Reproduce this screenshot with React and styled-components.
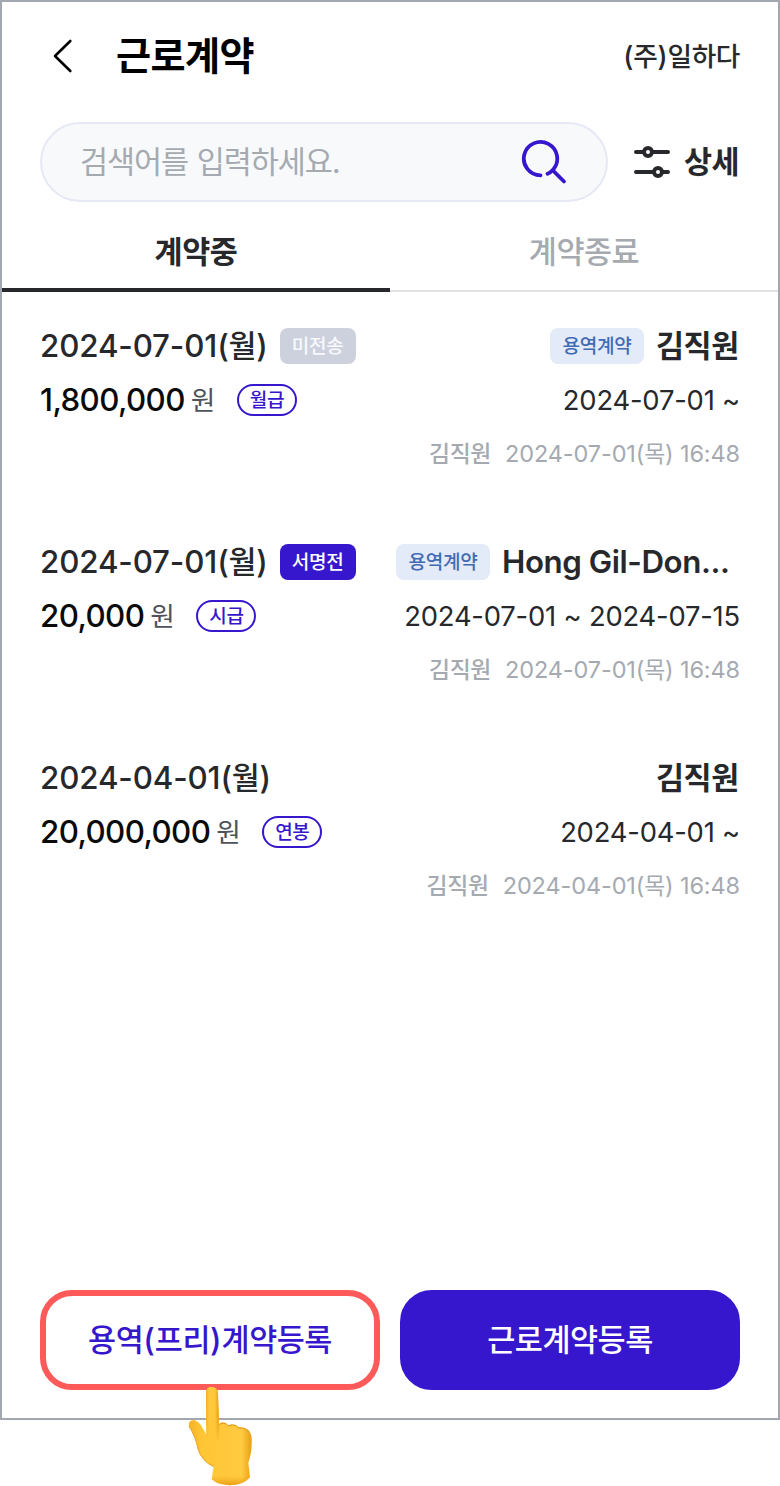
import React from "react";
import styled, { createGlobalStyle } from "styled-components";

const color = {
  primary: "#3617CE",
  ink: "#26282B",
  black: "#0A0A0A",
  muted: "#A5AAB1",
  frame: "#A3A8B0",
  highlight: "#FF5A5A",
};

const GlobalStyle = createGlobalStyle`
  * { box-sizing: border-box; }
  body {
    margin: 0;
    background: #fff;
    font-family: Inter, "Noto Sans CJK KR", sans-serif;
    color: ${color.ink};
  }
  button { font: inherit; color: inherit; border: 0; background: none; padding: 0; margin: 0; }
`;

const Page = styled.div`
  position: relative;
  width: 780px;
  height: 1486px;
  overflow: hidden;
`;

const Frame = styled.main`
  display: flex;
  flex-direction: column;
  width: 780px;
  height: 1420px;
  border: 2px solid ${color.frame};
`;

/* One line of text: Hangul runs are set slightly smaller than Latin ones. */
const Line = styled.span`
  display: block;
  white-space: pre;
  font-size: ${(p) => p.$size * 0.978}px;
  font-weight: ${(p) => p.$weight || 400};
  letter-spacing: ${(p) => p.$track || 0}px;
  color: ${(p) => p.$color || "inherit"};
  line-height: 36px;
`;

const Hangul = styled.span`
  font-family: "Noto Sans CJK KR", sans-serif;
  font-size: 0.975em;
  letter-spacing: ${(p) => (p.$tight ? -0.035 : -0.0156)}em;
  line-height: 1;
`;

function Text({ children, $tight, ...rest }) {
  const runs = children.split(/([\uac00-\ud7a3]+)/).filter(Boolean);
  return (
    <Line {...rest}>
      {runs.map((run, i) =>
        /[\uac00-\ud7a3]/.test(run) ? <Hangul key={i} $tight={$tight}>{run}</Hangul> : run
      )}
    </Line>
  );
}

const Header = styled.header`
  display: flex;
  align-items: center;
  height: 108px;
  padding: 0 38px;
`;

const BackButton = styled.button`
  display: flex;
  width: 44px;
  height: 44px;
  margin-right: 32px;
`;

const Title = styled.h1`
  margin: 0 0 4px;
`;

const Company = styled.div`
  margin-left: auto;
`;

const SearchRow = styled.div`
  display: flex;
  align-items: center;
  margin-top: 12px;
  padding: 0 38px;
`;

const SearchField = styled.div`
  display: flex;
  align-items: center;
  justify-content: space-between;
  width: 568px;
  height: 80px;
  padding: 0 38px;
  border: 2px solid #e6e9f5;
  border-radius: 40px;
  background: #f8f9fb;
`;

const DetailButton = styled.button`
  display: flex;
  align-items: center;
  gap: 14px;
  margin-left: 26px;
`;

const Tabs = styled.nav`
  display: grid;
  grid-template-columns: 1fr 1fr;
  height: 80px;
  margin-top: 10px;
  margin-bottom: 36px;
  flex-shrink: 0;
  box-shadow: inset 0 -2px #e0e1e3;
`;

const Tab = styled.button`
  display: flex;
  align-items: center;
  justify-content: center;
  border-bottom: 4px solid ${(p) => (p.$active ? color.ink : "transparent")};
  padding-top: 4px;
`;

const List = styled.section`
  display: flex;
  flex-direction: column;
  gap: 72px;
  padding: 0 38px;
`;

const Card = styled.article`
  display: flex;
  flex-direction: column;
  gap: 18px;
`;

const CardRow = styled.div`
  display: flex;
  align-items: center;
  justify-content: ${(p) => (p.$end ? "flex-end" : "space-between")};
  gap: ${(p) => (p.$end ? 14 : 0)}px;
  height: 36px;
`;

const Group = styled.div`
  display: flex;
  align-items: center;
  gap: ${(p) => p.$gap || 12}px;
`;

const tones = {
  idle: ["#CDD1DD", "#F8F9FB"],
  primary: [color.primary, "#fff"],
  soft: ["#E3EAF8", "#416BB3"],
};

const Badge = styled.div`
  display: flex;
  align-items: center;
  justify-content: center;
  width: ${(p) => p.$width}px;
  height: 36px;
  border-radius: 8px;
  background: ${(p) => tones[p.$tone][0]};
  color: ${(p) => tones[p.$tone][1]};
`;

const Pill = styled.div`
  display: flex;
  align-items: center;
  justify-content: center;
  width: 60px;
  height: 32px;
  margin-left: 16px;
  border: 2px solid ${color.primary};
  border-radius: 16px;
  color: ${color.primary};
`;

const NameBox = styled.div`
  width: ${(p) => p.$width}px;
`;

const Actions = styled.footer`
  display: grid;
  grid-template-columns: 1fr 1fr;
  gap: 20px;
  margin-top: auto;
  padding: 0 38px 28px;
`;

const ActionButton = styled.button`
  display: flex;
  align-items: center;
  justify-content: center;
  height: 100px;
  border-radius: 32px;
  border: 6px solid ${(p) => (p.$outlined ? color.highlight : color.primary)};
  background: ${(p) => (p.$outlined ? "#fff" : color.primary)};
  color: ${(p) => (p.$outlined ? color.primary : "#fff")};
`;

const Pointer = styled.svg`
  position: absolute;
  left: 170px;
  top: 1370px;
`;

const BackIcon = () => (
  <svg width="44" height="44" viewBox="0 0 44 44" fill="none">
    <path d="M30.3 7 L15 22 L30.3 37" stroke="#000" strokeWidth="2.6" strokeLinecap="round" strokeLinejoin="round" />
  </svg>
);

const SearchIcon = () => (
  <svg width="48" height="48" viewBox="0 -0.5 48 48" fill="none" stroke={color.primary} strokeWidth="3.8" strokeLinecap="round" strokeLinejoin="round">
    <path d="M20.5 36.8 A16.7 16.7 0 1 1 33 31.2 Q30.5 34 27.6 35.3" />
    <path d="M33 32 L44 43" />
  </svg>
);

const FilterIcon = () => (
  <svg width="36" height="36" viewBox="0 0 36 36" fill="#fff" stroke={color.ink} strokeWidth="4" strokeLinecap="round">
    <path d="M2 8 H34 M2 28 H34" />
    <circle cx="14" cy="8" r="4" />
    <circle cx="24" cy="28" r="4" />
  </svg>
);

const PointingHand = () => (
  <Pointer width="110" height="116" viewBox="0 0 330 348">
    <defs>
      <linearGradient id="finger" x1="0" x2="1">
        <stop offset="0" stopColor="#F2AE20" />
        <stop offset="0.25" stopColor="#FFC83D" />
        <stop offset="0.7" stopColor="#FFC636" />
        <stop offset="1" stopColor="#E39A14" />
      </linearGradient>
      <linearGradient id="fade" x1="0" x2="0" y1="0" y2="1">
        <stop offset="0.55" stopColor="#fff" />
        <stop offset="0.95" stopColor="#000" />
      </linearGradient>
      <mask id="fingerFade">
        <rect x="100" y="40" width="60" height="185" fill="url(#fade)" />
      </mask>
      <linearGradient id="palm" gradientUnits="userSpaceOnUse" x1="55" x2="246" y1="0" y2="0">
        <stop offset="0" stopColor="#F4B226" />
        <stop offset="0.2" stopColor="#FFC535" />
        <stop offset="0.84" stopColor="#FFCA40" />
        <stop offset="1" stopColor="#E79D12" />
      </linearGradient>
      <linearGradient id="wrist" x1="0" x2="0" y1="0" y2="1">
        <stop offset="0.6" stopColor="#EFA51A" stopOpacity="0" />
        <stop offset="1" stopColor="#E79A12" stopOpacity="0.9" />
      </linearGradient>
    </defs>
    <path d="M108 70 Q108 51 124 51 Q143 51 144 70 L147 161 Q162 151 175 166 Q192 158 207 172 Q224 169 237 182 Q247 194 245 218 Q245 250 235 278 L240 322 Q220 346 178 346 Q143 344 125 328 L131 290 Q96 274 84 237 Q77 199 57 169 Q53 151 72 150 Q88 153 99 176 L109 193 Z" fill="url(#palm)" />
    <path d="M108 70 Q108 51 124 51 Q143 51 144 70 L147 163 L147 221 L109 221 Z" fill="url(#finger)" mask="url(#fingerFade)" />
    <path d="M57 169 Q77 199 84 237 Q96 274 131 290" fill="none" stroke="#E6A11C" strokeWidth="3" />
    <path d="M149 163 Q163 153 175 168 Q192 160 207 174 Q224 171 236 184" fill="none" stroke="#DE9818" strokeWidth="3" strokeLinecap="round" />
    <path d="M131 278 L125 328 Q143 344 178 346 Q220 346 240 322 L235 275 Z" fill="url(#wrist)" />
  </Pointer>
);

const contracts = [
  {
    date: "2024-07-01(월)",
    status: ["미전송", "idle"],
    service: true,
    name: "김직원",
    nameWidth: 84,
    amount: "1,800,000",
    pay: "월급",
    period: "2024-07-01 ~",
    log: "2024-07-01(목) 16:48",
  },
  {
    date: "2024-07-01(월)",
    status: ["서명전", "primary"],
    service: true,
    name: "Hong Gil-Don...",
    nameWidth: 238,
    amount: "20,000",
    pay: "시급",
    period: "2024-07-01 ~ 2024-07-15",
    log: "2024-07-01(목) 16:48",
  },
  {
    date: "2024-04-01(월)",
    name: "김직원",
    nameWidth: 84,
    amount: "20,000,000",
    pay: "연봉",
    period: "2024-04-01 ~",
    log: "2024-04-01(목) 16:48",
  },
];

function Contract({ item }) {
  return (
    <Card>
      <CardRow>
        <Group>
          <Text $size={32} $weight={500} $track={-0.12}>{item.date}</Text>
          {item.status && (
            <Badge $tone={item.status[1]} $width={76}>
              <Text $size={20} $weight={500}>{item.status[0]}</Text>
            </Badge>
          )}
        </Group>
        <Group>
          {item.service && (
            <Badge $tone="soft" $width={94}>
              <Text $size={20} $weight={500}>용역계약</Text>
            </Badge>
          )}
          <NameBox $width={item.nameWidth}>
            <Text $size={32} $weight={600} $track={-0.43}>{item.name}</Text>
          </NameBox>
        </Group>
      </CardRow>
      <CardRow>
        <Group $gap={6}>
          <Text $size={32} $weight={530} $track={-0.6} $color={color.black}>{item.amount}</Text>
          <Text $size={28} $color="#4E535B">원</Text>
          <Pill>
            <Text $size={20} $weight={500}>{item.pay}</Text>
          </Pill>
        </Group>
        <Text $size={28} $track={-0.2}>{item.period}</Text>
      </CardRow>
      <CardRow $end>
        <Text $size={24} $weight={500} $color={color.muted}>김직원</Text>
        <Text $size={24} $track={-0.1} $color={color.muted}>{item.log}</Text>
      </CardRow>
    </Card>
  );
}

export default function App() {
  return (
    <Page>
      <GlobalStyle />
      <Frame>
        <Header>
          <BackButton><BackIcon /></BackButton>
          <Title><Text $size={40} $weight={700} $color="#000">근로계약</Text></Title>
          <Company>
            <Text $size={28} $weight={500}>(주)일하다</Text>
          </Company>
        </Header>
        <SearchRow>
          <SearchField>
            <Text $size={32} $tight $color={color.muted}>검색어를 입력하세요.</Text>
            <SearchIcon />
          </SearchField>
          <DetailButton>
            <FilterIcon />
            <Text $size={32} $weight={600}>상세</Text>
          </DetailButton>
        </SearchRow>
        <Tabs>
          <Tab $active><Text $size={32} $weight={600}>계약중</Text></Tab>
          <Tab><Text $size={32} $weight={500} $color={color.muted}>계약종료</Text></Tab>
        </Tabs>
        <List>
          {contracts.map((item, i) => <Contract key={i} item={item} />)}
        </List>
        <Actions>
          <ActionButton $outlined><Text $size={32} $weight={500}>용역(프리)계약등록</Text></ActionButton>
          <ActionButton><Text $size={32} $weight={500}>근로계약등록</Text></ActionButton>
        </Actions>
      </Frame>
      <PointingHand />
    </Page>
  );
}
